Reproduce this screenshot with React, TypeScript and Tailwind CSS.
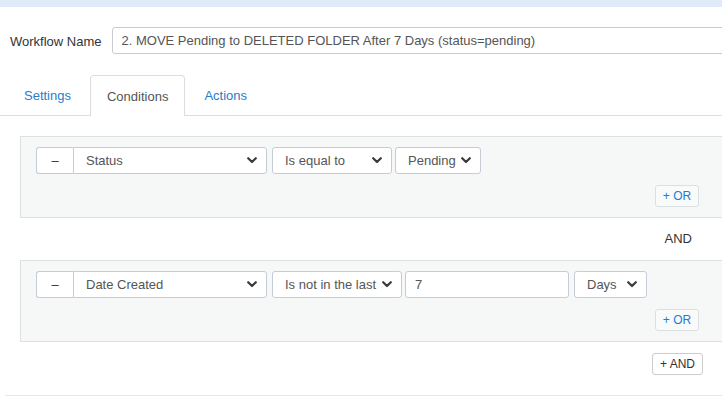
import React from "react";

const font = { fontFamily: '"Liberation Sans", Arial, sans-serif' };

function Chevron() {
  return (
    <svg width="10" height="7" viewBox="0 0 10 7" className="shrink-0">
      <polyline points="1.2,1.2 5,5 8.8,1.2" fill="none" stroke="#3a3a3a" strokeWidth="2.2" strokeLinecap="round" strokeLinejoin="round" />
    </svg>
  );
}

function Select({ label, w, grouped = false, ml = "" }: { label: string; w: string; grouped?: boolean; ml?: string }) {
  return (
    <div
      className={`${w} ${ml} h-[27px] flex items-center justify-between border border-[#c5ccd5] bg-white pl-[12px] pr-[9px] text-[13px] text-[#555] ${grouped ? "rounded-r-[3px]" : "rounded-[3px]"}`}
    >
      <span className="whitespace-nowrap">{label}</span>
      <Chevron />
    </div>
  );
}

function Minus() {
  return (
    <div className="w-[37px] h-[27px] flex items-center justify-center border border-r-0 border-[#c5ccd5] bg-white rounded-l-[3px] text-[13px] text-[#333]">
      –
    </div>
  );
}

function OrBtn() {
  return (
    <div className="flex justify-end pr-[40px] mt-[11px]">
      <div className="h-[22px] w-[44px] flex items-center justify-center border border-[#dcdfe2] rounded-[3px] bg-[#f9fafa] text-[12px] text-[#1f7ad2]">
        + OR
      </div>
    </div>
  );
}

export default function App() {
  return (
    <div className="w-[722px] h-[411px] overflow-hidden bg-white relative" style={font}>
      <div className="h-[7px] bg-[#dfebf8]" />
      <div className="flex items-center mt-[20px] pl-[10px] gap-[10px]">
        <span className="text-[13px] text-[#333] whitespace-nowrap pt-[2px]">Workflow Name</span>
        <div className="w-[700px] shrink-0 h-[27px] flex items-center border border-[#c8cbcf] rounded-[3px] pl-[9px] text-[13px] text-[#555] whitespace-nowrap">
          2. MOVE Pending to DELETED FOLDER After 7 Days (status=pending)
        </div>
      </div>
      <div className="mt-[21px] flex border-b border-[#dddddd] pl-[7px] h-[41px] items-end">
        <div className="h-[40px] mr-[2px] px-[17px] pt-[2px] flex items-center text-[13px] text-[#2a7ccb]">Settings</div>
        <div className="h-[41px] -mb-px mr-[2px] px-[16px] pt-[2px] flex items-center border border-b-0 border-[#dddddd] rounded-t-[4px] bg-white text-[13px] text-[#555]">
          Conditions
        </div>
        <div className="h-[40px] px-[17px] pt-[2px] flex items-center text-[13px] text-[#2a7ccb]">Actions</div>
      </div>

      <div className="mt-[20px] ml-[20px] w-[720px] border border-[#dde1e4] bg-[#f6f8f8] pt-[10px] pb-[10px] pl-[15px]">
        <div className="flex items-center">
          <Minus />
          <Select label="Status" w="w-[194px]" grouped />
          <Select label="Is equal to" w="w-[120px]" ml="ml-[5px]" />
          <Select label="Pending" w="w-[86px]" ml="ml-[3px]" />
        </div>
        <OrBtn />
      </div>

      <div className="h-[42px] flex items-center justify-end pr-[30px] text-[13px] text-[#333]">AND</div>

      <div className="ml-[20px] w-[720px] border border-[#dde1e4] bg-[#f6f8f8] pt-[10px] pb-[10px] pl-[15px]">
        <div className="flex items-center">
          <Minus />
          <Select label="Date Created" w="w-[194px]" grouped />
          <Select label="Is not in the last" w="w-[130px]" ml="ml-[5px]" />
          <div className="ml-[3px] w-[164px] h-[27px] flex items-center border border-[#c5ccd5] rounded-[3px] bg-white pl-[9px] text-[13px] text-[#555]">
            7
          </div>
          <Select label="Days" w="w-[73px]" ml="ml-[5px]" />
        </div>
        <OrBtn />
      </div>

      <div className="flex justify-end pr-[19px] mt-[11px]">
        <div className="h-[22px] w-[51px] flex items-center justify-center border border-[#cccccc] rounded-[3px] bg-white text-[12px] text-[#333]">
          + AND
        </div>
      </div>

      <div className="ml-[5px] mt-[20px] border-t border-[#e5e6e7]" />
    </div>
  );
}
